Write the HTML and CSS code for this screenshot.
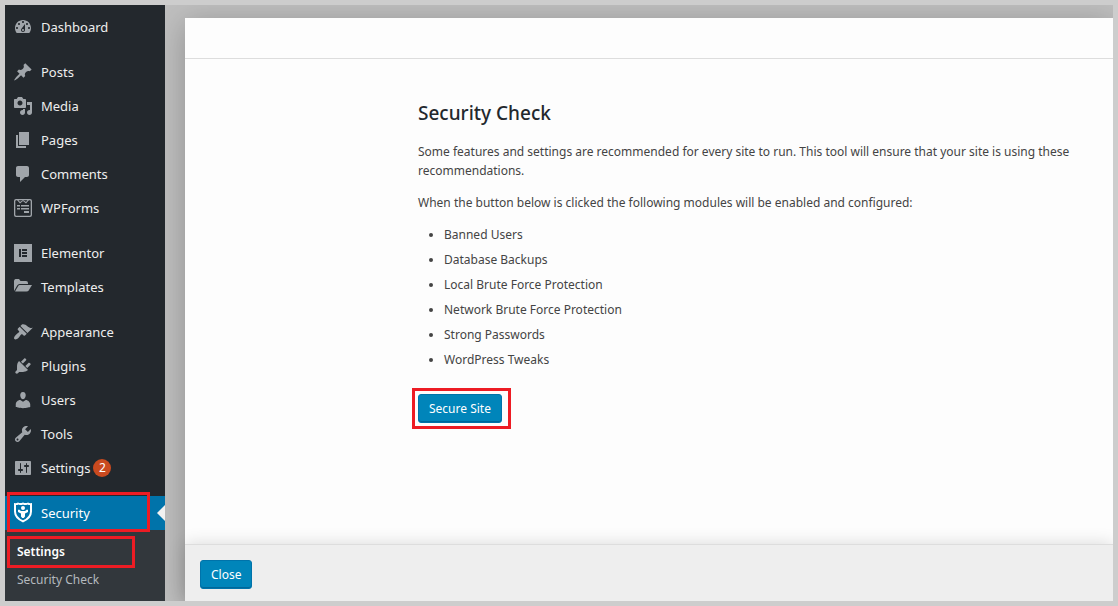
FILE: index.html
```
<!DOCTYPE html>
<html lang="en">
<head>
  <meta charset="utf-8">
  <title>Security Settings</title>
  <link rel="stylesheet" href="styles.css">
</head>
<body>
  <div class="admin">

    <!-- Sidebar -->
    <nav class="sidebar">
      <ul class="menu">
        <li><a href="#">
          <svg viewBox="0 0 20 20"><path fill-rule="evenodd" d="M3.76 16h12.48c1.1-1.37 1.76-3.11 1.76-5 0-4.42-3.58-8-8-8s-8 3.58-8 8c0 1.89.66 3.63 1.76 5zM10 4c.55 0 1 .45 1 1s-.45 1-1 1-1-.45-1-1 .45-1 1-1zM6 6c.55 0 1 .45 1 1s-.45 1-1 1-1-.45-1-1 .45-1 1-1zm8 0c.55 0 1 .45 1 1s-.45 1-1 1-1-.45-1-1 .45-1 1-1zm-5.37 5.55L12 7v6c0 1.1-.9 2-2 2s-2-.9-2-2c0-.57.24-1.08.63-1.45zM4 10c.55 0 1 .45 1 1s-.45 1-1 1-1-.45-1-1 .45-1 1-1zm12 0c.55 0 1 .45 1 1s-.45 1-1 1-1-.45-1-1 .45-1 1-1zm-5 3c0-.55-.45-1-1-1s-1 .45-1 1 .45 1 1 1 1-.45 1-1z"/></svg>
          Dashboard</a></li>
        <li class="group"><a href="#">
          <svg viewBox="0 0 20 20"><path d="M10.44 3.02l1.82-1.82 6.36 6.35-1.83 1.82c-1.05-.68-2.48-.57-3.41.36l-.75.75c-.92.93-1.04 2.35-.35 3.41l-1.83 1.82-2.41-2.41-2.8 2.79c-.42.42-3.38 2.71-3.8 2.29s1.86-3.39 2.28-3.81l2.79-2.79L4.1 9.36l1.83-1.82c1.05.69 2.48.57 3.4-.36l.75-.75c.93-.92 1.05-2.35.36-3.41z"/></svg>
          Posts</a></li>
        <li><a href="#">
          <svg viewBox="0 0 20 20"><path fill-rule="evenodd" d="M13 11V4c0-.55-.45-1-1-1h-1.67L9 1H5L3.67 3H2c-.55 0-1 .45-1 1v7c0 .55.45 1 1 1h10c.55 0 1-.45 1-1zM7 4.5c1.38 0 2.5 1.12 2.5 2.5S8.38 9.5 7 9.5 4.5 8.38 4.5 7 5.62 4.5 7 4.5zM14 6h5v10.5c0 1.38-1.12 2.5-2.5 2.5S14 17.88 14 16.5s1.12-2.5 2.5-2.5c.17 0 .34.02.5.05V9h-3V6zm-4 8.05V13h2v3.5c0 1.38-1.12 2.5-2.5 2.5S7 17.88 7 16.5 8.12 14 9.5 14c.17 0 .34.02.5.05z"/></svg>
          Media</a></li>
        <li><a href="#">
          <svg viewBox="0 0 20 20"><path d="M6 15V2h10v13H6zm-1 1h8v2H3V5h2v11z"/></svg>
          Pages</a></li>
        <li><a href="#">
          <svg viewBox="0 0 20 20"><path d="M5 2h9c1.1 0 2 .9 2 2v7c0 1.1-.9 2-2 2h-2l-5 5v-5H5c-1.1 0-2-.9-2-2V4c0-1.1.9-2 2-2z"/></svg>
          Comments</a></li>
        <li><a href="#">
          <svg viewBox="0 0 20 20"><path fill-rule="evenodd" d="M3 1h14a2 2 0 0 1 2 2v14a2 2 0 0 1-2 2H3a2 2 0 0 1-2-2V3a2 2 0 0 1 2-2zm0 1.300l-.7.7v14l.7.7h14l.7-.7V3l-.7-.7z"/><path d="M4 2l3 3.500L10 3l3 2.500L16 2h-1.500L13 4l-3-2-3 2-1.500-2zM4 7h3v1.500H4zM8 7h8v1.500H8zM4 10h3v1.500H4zM8 10h8v1.500H8zM11 13h5v2h-5z"/></svg>
          WPForms</a></li>
        <li class="group"><a href="#">
          <svg viewBox="0 0 20 20"><path fill-rule="evenodd" d="M1 1h18v18H1zM6 6v8h2V6zM9 6v2h5V6zM9 9v2h5V9zM9 12v2h5v-2z"/></svg>
          Elementor</a></li>
        <li><a href="#">
          <svg viewBox="0 0 20 20"><path d="M1 14V4q0-1.500 1.500-2H6l1.500 2H13q2 0 2 2v1H6.500Q5 7 4.200 8.500z"/><path d="M6.500 8H19l-3.200 5.300Q15 14.500 13.500 14.500H2L5.200 9Q5.800 8 6.500 8z"/></svg>
          Templates</a></li>
        <li class="group"><a href="#">
          <svg viewBox="0 0 20 20"><path d="M14.480 11.060L7.410 3.990l1.500-1.500c.5-.56 2.300-.47 3.510.32 1.210.8 1.430 1.280 2.910 2.100 1.180.64 2.450 1.260 4.450.85zm-.71.71L6.700 4.700 4.930 6.470c-.39.39-.39 1.020 0 1.410l1.060 1.060c.39.39.39 1.030 0 1.420-.6.6-1.430 1.110-2.210 1.690-.35.26-.7.53-1.010.84C1.430 14.230.4 16.080 1.400 17.070c.99 1 2.840-.03 4.180-1.360.31-.31.58-.66.85-1.020.57-.78 1.080-1.610 1.690-2.210.39-.39 1.020-.39 1.410 0l1.060 1.060c.39.39 1.020.39 1.410 0z"/></svg>
          Appearance</a></li>
        <li><a href="#">
          <svg viewBox="0 0 20 20"><path d="M13.110 4.360L9.870 7.600 8 5.730l3.240-3.240c.35-.34 1.050-.2 1.560.32.52.51.66 1.210.31 1.550zm-8 1.770l.91-1.120 9.010 9.010-1.190.84c-.71.71-2.630 1.160-3.820 1.160H6.140L4.900 17.260c-.59.59-1.540.59-2.120 0-.59-.58-.59-1.530 0-2.120l1.240-1.240v-3.880c0-1.130.4-3.190 1.090-3.890zm7.260 3.970l3.240-3.240c.34-.35 1.040-.21 1.550.31.52.51.66 1.210.31 1.550l-3.240 3.250z"/></svg>
          Plugins</a></li>
        <li><a href="#">
          <svg viewBox="0 0 20 20"><path d="M10 9.250c-2.270 0-2.730-3.440-2.730-3.440C7 4.020 7.820 2 9.970 2c2.160 0 2.980 2.020 2.710 3.810 0 0-.41 3.440-2.680 3.440zm0 2.570L12.720 10c2.390 0 4.520 2.330 4.520 4.530v2.490s-3.650 1.130-7.240 1.130c-3.650 0-7.240-1.130-7.240-1.130v-2.490c0-2.250 1.940-4.480 4.470-4.480z"/></svg>
          Users</a></li>
        <li><a href="#">
          <svg viewBox="0 0 20 20"><path fill-rule="evenodd" d="M16.680 9.770c-1.340 1.340-3.300 1.670-4.950.99l-5.410 6.520c-.99.99-2.590.99-3.580 0s-.99-2.590 0-3.570l6.520-5.420c-.68-1.650-.35-3.610.99-4.950 1.280-1.280 3.120-1.620 4.720-1.060l-2.890 2.890 2.820 2.820 2.860-2.870c.53 1.580.18 3.390-1.080 4.650zM3.810 16.210c.4.39 1.040.39 1.430 0 .4-.4.4-1.040 0-1.430-.39-.4-1.030-.4-1.430 0-.39.39-.39 1.030 0 1.430z"/></svg>
          Tools</a></li>
        <li><a href="#">
          <svg viewBox="0 0 20 20"><path fill-rule="evenodd" d="M18 16V4c0-.55-.45-1-1-1H3c-.55 0-1 .45-1 1v12c0 .55.45 1 1 1h14c.55 0 1-.45 1-1zM8 11h1c.55 0 1 .45 1 1s-.45 1-1 1H8v1.500c0 .28-.22.5-.5.5s-.5-.22-.5-.5V13H6c-.55 0-1-.45-1-1s.45-1 1-1h1V5.500c0-.28.22-.5.5-.5s.5.22.5.5V11zm5-2h-1c-.55 0-1-.45-1-1s.45-1 1-1h1V5.500c0-.28.22-.5.5-.5s.5.22.5.5V7h1c.55 0 1 .45 1 1s-.45 1-1 1h-1v5.500c0 .28-.22.5-.5.5s-.5-.22-.5-.5V9z"/></svg>
          Settings <span class="count">2</span></a></li>
        <li class="group current"><a href="#">
          <svg viewBox="0 0 20 20"><path fill-rule="evenodd" d="M1 0q2.500.5 4-.5 2 1.200 5 0 3 1.200 5 0 1.500 1 4 .5v8.500q0 7-9 11-9-4-9-11zM3 2v6.500Q3 14 10 17.300 17 14 17 8.500V2Q15.500 2 14.500 1.500 12 2.500 10 1.500 8 2.500 5.500 1.500 4.500 2 3 2z"/><circle cx="10" cy="5" r="2"/><path d="M5 7l1-.5 2 1.500h4l2-1.500 1 .5v2l-3 1.500v3L10.800 15H9.200L8 13.500v-3L5 9z"/></svg>
          Security</a></li>
      </ul>
      <ul class="submenu">
        <li class="current"><a href="#">Settings</a></li>
        <li><a href="#">Security Check</a></li>
      </ul>
    </nav>

    <!-- Modal -->
    <main class="backdrop">
      <section class="modal">
        <header class="modal-header"></header>
        <div class="modal-content">
          <h1>Security Check</h1>
          <p>Some features and settings are recommended for every site to run. This tool will ensure that your site is using these recommendations.</p>
          <p>When the button below is clicked the following modules will be enabled and configured:</p>
          <ul class="modules">
            <li>Banned Users</li>
            <li>Database Backups</li>
            <li>Local Brute Force Protection</li>
            <li>Network Brute Force Protection</li>
            <li>Strong Passwords</li>
            <li>WordPress Tweaks</li>
          </ul>
          <div class="secure"><button type="button">Secure Site</button></div>
        </div>
        <footer class="modal-footer">
          <button type="button">Close</button>
        </footer>
      </section>
    </main>

  </div>
</body>
</html>
```
FILE: styles.css
```
* {
  box-sizing: border-box;
}

body {
  margin: 0;
  background-color: #cdcdcd;
  color: #444;
  font-family: "Segoe UI", "Noto Sans", "Open Sans", sans-serif;
  font-size: 12px;
}

.admin {
  display: flex;
  min-height: 100vh;
  padding: 5px;
}

ul {
  list-style: none;
  margin: 0;
  padding: 0;
}

/* sidebar */
.sidebar {
  display: flex;
  flex-direction: column;
  flex: 0 0 160px;
  padding-top: 5px;
  background-color: #23282d;
}

.menu a {
  display: flex;
  align-items: center;
  height: 34px;
  padding-left: 8px;
  color: #eee;
  font-size: 13px;
  text-decoration: none;
}

.menu svg {
  width: 20px;
  height: 20px;
  margin-right: 8px;
  fill: #a0a5aa;
  overflow: visible;
}

.menu .group {
  margin-top: 11px;
}

.count {
  width: 18px;
  height: 18px;
  margin-left: 3px;
  border-radius: 50%;
  background-color: #ca4a1f;
  color: white;
  font-size: 12px;
  line-height: 18px;
  text-align: center;
}

.menu .current {
  position: relative;
  background-color: #0073aa;
}

.menu .current a {
  color: white;
}

.menu .current svg {
  fill: white;
}

/* arrow pointing at the open section */
.menu .current::after {
  content: "";
  position: absolute;
  top: 9px;
  right: 0;
  border: 8px solid transparent;
  border-right-color: #f1f1f1;
  border-left-width: 0;
}

.submenu {
  flex: 1;
  padding: 8px 0 7px;
  background-color: #32373c;
}

.submenu a {
  display: block;
  padding-left: 12px;
  color: #b4b9be;
  line-height: 28px;
  text-decoration: none;
}

.submenu .current {
  position: relative;
}

.submenu .current a {
  color: white;
  font-weight: 600;
}

/* red marker frames */
.menu .current::before,
.submenu .current::before {
  content: "";
  position: absolute;
  z-index: 1;
  border: 3px solid #ed1c24;
}

.menu .current::before {
  inset: -4px 15px -2px 2px;
}

.submenu .current::before {
  inset: -2px 30px -2px 2px;
}

/* modal */
.backdrop {
  display: flex;
  flex: 1;
  padding: 13px 0 0 20px;
  background-color: #bfbfbf;
  overflow: hidden;
}

.modal {
  display: flex;
  flex-direction: column;
  flex: 1;
  background-color: #fdfdfd;
  box-shadow: 0 5px 30px rgba(0, 0, 0, 0.25);
}

.modal-header {
  height: 41px;
  border-bottom: 1px solid #ddd;
}

.modal-content {
  flex: 1;
  padding: 41px 32px 32px 233px;
}

h1 {
  margin: 0 0 16px;
  color: #23282d;
  font-size: 19px;
  font-weight: 500;
  line-height: 26px;
}

p {
  margin: 0 0 13px;
  line-height: 19px;
}

.modules {
  padding-left: 26px;
  list-style: disc;
}

.modules li {
  margin-bottom: 6px;
  line-height: 19px;
}

button {
  height: 29px;
  padding: 0 10px;
  border: 1px solid #0073aa;
  border-radius: 3px;
  background-color: #0085ba;
  box-shadow: inset 0 -1px 0 #006799;
  color: white;
  font-family: inherit;
  font-size: 12px;
  cursor: pointer;
}

.secure {
  width: fit-content;
  margin: 19px 0 0 -6px;
  padding: 3px 6px 3px 3px;
  border: 3px solid #ed1c24;
}

.modal-footer {
  height: 57px;
  padding: 15px;
  border-top: 1px solid #ddd;
  background-color: #eee;
  box-shadow: 0 0 16px rgba(0, 0, 0, 0.15);
}
```
